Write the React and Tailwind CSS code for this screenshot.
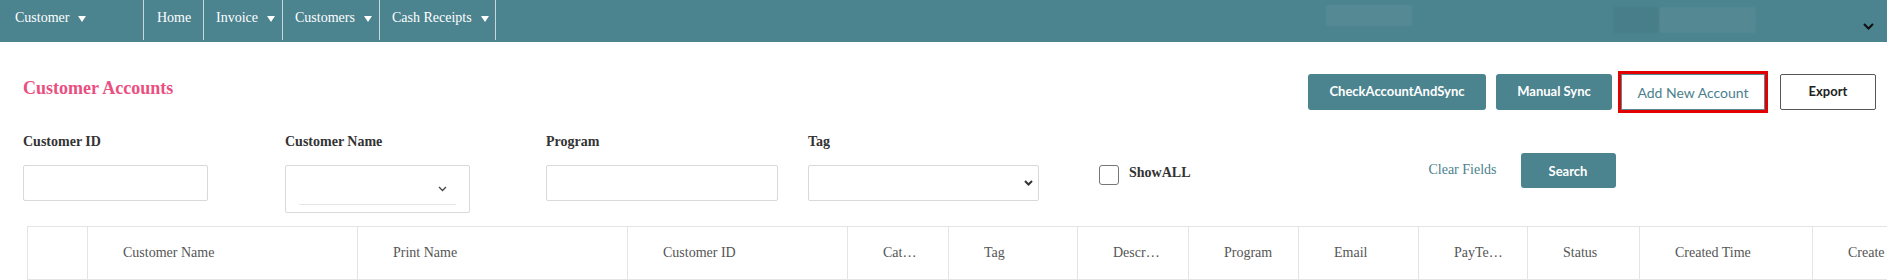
import React from "react";

function Tri() {
  return (
    <svg width="8" height="6" viewBox="0 0 8 6" className="ml-[9px] mt-[6px]">
      <path d="M0 0H8L4 6Z" fill="white" />
    </svg>
  );
}

const cols = [
  { w: "w-[60px]", t: "" },
  { w: "w-[270px]", t: "Customer Name" },
  { w: "w-[270px]", t: "Print Name" },
  { w: "w-[220px]", t: "Customer ID" },
  { w: "w-[101px]", t: "Cat…" },
  { w: "w-[129px]", t: "Tag" },
  { w: "w-[111px]", t: "Descr…" },
  { w: "w-[110px]", t: "Program" },
  { w: "w-[120px]", t: "Email" },
  { w: "w-[109px]", t: "PayTe…" },
  { w: "w-[112px]", t: "Status" },
  { w: "w-[173px]", t: "Created Time" },
  { w: "w-[200px]", t: "Create" },
];

export default function App() {
  return (
    <div className="w-[1887px] h-[280px] overflow-hidden bg-white font-['Liberation_Serif','Times_New_Roman',serif] text-[14px]">
      {/* NAV */}
      <nav className="flex h-[42px] bg-[#4b838f] text-white leading-[16px]">
        <div className="flex w-[143px] h-[40px] items-start pt-[10px] pl-[15px]">
          <span>Customer</span>
          <Tri />
        </div>
        <div className="flex w-[60px] h-[40px] items-start pt-[10px] pl-[13px] border-l border-[#cad7da]">
          <span>Home</span>
        </div>
        <div className="flex w-[79px] h-[40px] items-start pt-[10px] pl-[12px] border-l border-[#cad7da]">
          <span>Invoice</span>
          <Tri />
        </div>
        <div className="flex w-[97px] h-[40px] items-start pt-[10px] pl-[12px] border-l border-[#cad7da]">
          <span>Customers</span>
          <Tri />
        </div>
        <div className="flex w-[117px] h-[40px] items-start pt-[10px] pl-[12px] border-l border-r border-[#cad7da]">
          <span>Cash Receipts</span>
          <Tri />
        </div>
        <div className="ml-[830px] mt-[5px] w-[86px] h-[21px] bg-white/[0.06] blur-[1px]" />
        <div className="ml-[202px] mt-[7px] flex h-[26px]">
          <div className="w-[45px] h-[26px] bg-[#467c86]/60 blur-[1px]" />
          <div className="w-[97px] h-[26px] bg-white/[0.05] blur-[1px]" />
        </div>
        <div className="ml-auto mr-[13px] mt-[23px]">
          <svg width="11" height="7" viewBox="0 0 11 7">
            <path d="M1 1L5.5 5.5L10 1" fill="none" stroke="#111" strokeWidth="2" />
          </svg>
        </div>
      </nav>

      <div className="pl-[23px]">
        {/* TITLE + BUTTONS */}
        <div className="flex items-start justify-between pt-[32px] pr-[11px]">
          <h1 className="mt-[4px] text-[18px] leading-[21px] font-bold text-[#e9507f]">Customer Accounts</h1>
          <div className="flex items-start font-['Lato','Open_Sans',sans-serif]">
            <button className="w-[178px] h-[36px] rounded-[3px] bg-[#4b838f] text-white text-[13px] font-bold">
              CheckAccountAndSync
            </button>
            <button className="ml-[10px] w-[116px] h-[36px] rounded-[3px] bg-[#4b838f] text-white text-[13px] font-bold">
              Manual Sync
            </button>
            <div className="ml-[6px] -my-[3px] border-[3px] border-[#e30000]">
              <button className="block w-[144px] h-[36px] bg-white border border-[#5a8a96] text-[#4b7f8e] text-[14px]">
                Add New Account
              </button>
            </div>
            <button className="ml-[12px] w-[96px] h-[36px] rounded-[2px] bg-white border border-[#555] text-[#222] text-[13px] font-bold">
              Export
            </button>
          </div>
        </div>

        {/* FILTERS */}
        <div className="flex items-start mt-[24px] leading-[16px]">
          <div className="w-[262px]">
            <div className="font-bold text-[#333]">Customer ID</div>
            <div className="mt-[15px] w-[185px] h-[36px] rounded-[2px] border border-[#d9d9d9]" />
          </div>
          <div className="w-[261px]">
            <div className="font-bold text-[#333]">Customer Name</div>
            <div className="mt-[15px] w-[185px] h-[48px] rounded-[2px] border border-[#d9d9d9] px-[13px]">
              <div className="flex justify-end items-start pt-[20px] h-[39px] border-b border-[#e6e6e6]">
                <svg width="9" height="6" viewBox="0 0 9 6" className="mr-[9px]">
                  <path d="M1 1L4.5 4.5L8 1" fill="none" stroke="#444" strokeWidth="1.3" />
                </svg>
              </div>
            </div>
          </div>
          <div className="w-[262px]">
            <div className="font-bold text-[#333]">Program</div>
            <div className="mt-[15px] w-[232px] h-[36px] rounded-[2px] border border-[#d9d9d9]" />
          </div>
          <div className="w-[231px]">
            <div className="font-bold text-[#333]">Tag</div>
            <div className="mt-[15px] w-[231px] h-[36px] rounded-[2px] border border-[#d9d9d9] flex items-center justify-end pr-[5px]">
              <svg width="9" height="6" viewBox="0 0 9 6">
                <path d="M1 1L4.5 4.5L8 1" fill="none" stroke="#333" strokeWidth="2" />
              </svg>
            </div>
          </div>
          <div className="ml-[60px] mt-[31px] w-[20px] h-[20px] rounded-[3px] border border-[#767676]" />
          <div className="ml-[10px] mt-[31px] font-bold text-[#333]">ShowALL</div>
          <div className="ml-[238px] mt-[28px] text-[#4b7f8e]">Clear Fields</div>
          <button className="ml-[24px] mt-[19px] w-[95px] h-[35px] rounded-[3px] bg-[#4b838f] text-white text-[13px] font-bold font-['Lato','Open_Sans',sans-serif]">
            Search
          </button>
        </div>

        {/* TABLE */}
        <div className="mt-[13px] ml-[4px] flex border-t border-b border-[#e4e4e4] text-[#555] leading-[16px] whitespace-nowrap">
          {cols.map((c, i) => (
            <div
              key={i}
              className={`${c.w} shrink-0 h-[52px] flex items-center pl-[35px] pb-[1px] border-l border-[#e4e4e4]`}
            >
              {c.t}
            </div>
          ))}
        </div>
      </div>
    </div>
  );
}
